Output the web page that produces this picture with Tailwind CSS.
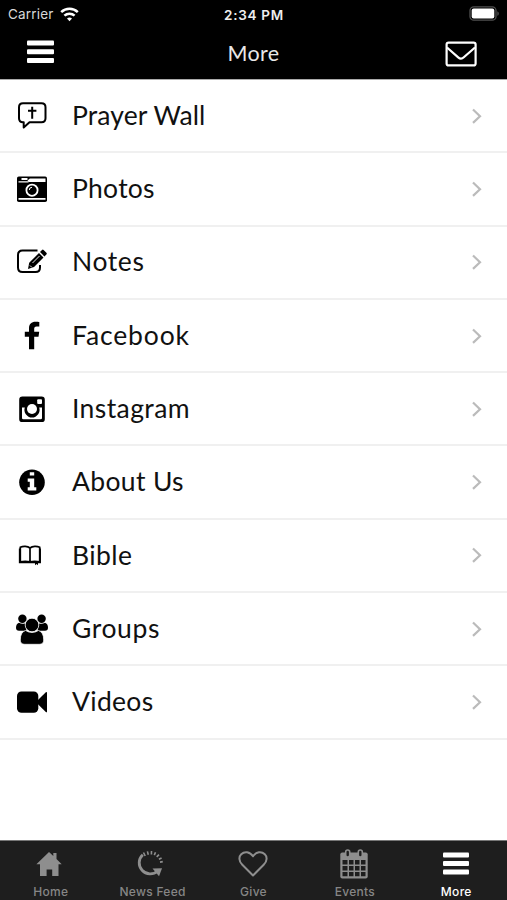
<!DOCTYPE html>
<html lang="en">

<head>
    <meta charset="UTF-8">
    <meta name="viewport" content="width=device-width, initial-scale=1.0">
    <title>More</title>
    <script src="https://cdn.jsdelivr.net/npm/@tailwindcss/browser@4"></script>
</head>

<body class="bg-white h-screen flex flex-col overflow-hidden font-['Lato','Open_Sans',sans-serif]">

    <header class="bg-black text-white h-20 shrink-0 border-b border-[#aaa]">
        <!-- Status bar -->
        <div class="h-7 grid grid-cols-3 items-center pl-[8px] pr-[7px] font-['Inter',sans-serif]">
            <div class="flex items-center gap-[6px] pb-px">
                <span class="text-[13.5px] leading-7 tracking-[0.2px] text-[#d8d8d8]">Carrier</span>
                <svg class="w-[19px] h-[15px]" viewBox="0 0 19 15" fill="none" stroke="#fff" stroke-width="2.5">
                    <path d="M1.2 5.2a12 12 0 0 1 16.6 0" />
                    <path d="M4.4 8.7a7.4 7.4 0 0 1 10.2 0" />
                    <path d="M9.5 14.2l-2.5-2.6a3.6 3.6 0 0 1 5 0z" fill="#fff" stroke="none" />
                </svg>
            </div>
            <span class="text-center text-[13.5px] leading-7 font-semibold tracking-[0.7px] text-[#eee]">2:34 PM</span>
            <svg class="w-[31px] h-[15px] justify-self-end mb-[2px]" viewBox="0 0 31 15">
                <rect x="1" y="0.8" width="26" height="13.4" rx="3.8" fill="none" stroke="#505050" stroke-width="1.3" />
                <rect x="2.7" y="2.5" width="22.6" height="10" rx="2" fill="#fff" />
                <path d="M28.3 5.2c2 .8 2 3.8 0 4.6z" fill="#505050" />
            </svg>
        </div>

        <div class="h-[51px] grid grid-cols-3 items-center pl-[27px] pr-[30px]">
            <svg class="w-[27px] h-6 mb-[3px]" viewBox="0 0 27 24" fill="#fff">
                <rect y="0.5" width="27" height="5" rx="1" />
                <rect y="9.3" width="27" height="5" rx="1" />
                <rect y="18" width="27" height="5" rx="1" />
            </svg>
            <h1 class="text-center text-[21.5px] leading-7 tracking-[0.3px] text-[#e8e8e8] pb-0.5 pl-[3px]">More</h1>
            <svg class="w-8 h-[26px] justify-self-end" viewBox="0 0 32 26" fill="none" stroke="#fff" stroke-width="2.2">
                <rect x="1.6" y="1.6" width="29" height="22.8" rx="2" />
                <path d="M2 6.5l11.2 9.8c2 1.800 3.600 1.800 5.600 0L30 6.500" />
            </svg>
        </div>
    </header>

    <main class="flex-1">
        <ul class="text-[26.5px] text-[#111]">
            <li class="h-[73.3px] flex items-center pl-[14px] pr-[24px] border-b-2 border-[#f0f0f0]">
                <svg class="w-9 h-9 mr-[22px]" viewBox="0 0 36 36" fill="none" stroke="#000" stroke-width="2">
                    <path d="M9 5.300h18.500q4 0 4 4v11q0 4-4 4H15.500L9.700 29.500v-5.200H9q-4 0-4-4v-11q0-4 4-4z" stroke-linejoin="round" />
                    <path d="M18.200 8.800v12M14 12.800h8.400" />
                </svg>
                <span class="flex-1 tracking-[0.1px]">Prayer Wall</span>
                <svg class="w-3 h-[18px]" viewBox="0 0 12 18" fill="none" stroke="#bbb" stroke-width="2.2"><path d="M2 2.5l7 6.700-7 6.700" /></svg>
            </li>
            <li class="h-[73.3px] flex items-center pl-[14px] pr-[24px] border-b-2 border-[#f0f0f0]">
                <svg class="w-9 h-9 mr-[22px]" viewBox="0 0 36 36">
                    <rect x="3" y="5.500" width="30" height="25.500" rx="1.800" />
                    <path d="M13.500 9.600l2.300-2H31.500v3.500H14.500" fill="#fff" />
                    <path d="M7.500 7h6v2h-6zM4.500 10.200h10v1.200h-10zM4.500 27h27v1.700h-27z" fill="#fff" />
                    <circle cx="18" cy="19.200" r="5.600" fill="none" stroke="#fff" stroke-width="1.800" />
                    <path d="M15.300 19a2.700 2.700 0 0 1 2.700-2.700" fill="none" stroke="#fff" />
                </svg>
                <span class="flex-1 tracking-[0.25px]">Photos</span>
                <svg class="w-3 h-[18px]" viewBox="0 0 12 18" fill="none" stroke="#bbb" stroke-width="2.2"><path d="M2 2.5l7 6.700-7 6.700" /></svg>
            </li>
            <li class="h-[73.3px] flex items-center pl-[14px] pr-[24px] border-b-2 border-[#f0f0f0]">
                <svg class="w-9 h-9 mr-[22px]" viewBox="0 0 36 36">
                    <path d="M23.500 6.500H8.500Q4 6.500 4 11v12.500Q4 28 8.500 28h13q4.500 0 4.500-4.500V21" fill="none" stroke="#000" stroke-width="2" />
                    <path d="M14 25l1.200-6.200L25 9l4.500 4.500-9.500 9.500zM26 8l2-2q.8-.8 1.600 0l2.800 2.800q.8.8 0 1.600l-2 2z" />
                    <path d="M18.500 19l7-7M16 21.500l1.800 1.800" stroke="#fff" stroke-width="0.9" />
                </svg>
                <span class="flex-1 tracking-[0.6px]">Notes</span>
                <svg class="w-3 h-[18px]" viewBox="0 0 12 18" fill="none" stroke="#bbb" stroke-width="2.2"><path d="M2 2.5l7 6.700-7 6.700" /></svg>
            </li>
            <li class="h-[73.3px] flex items-center pl-[14px] pr-[24px] border-b-2 border-[#f0f0f0]">
                <svg class="w-9 h-9 mr-[22px]" viewBox="0 0 36 36">
                    <path d="M25.300 4v4.400h-2.700c-2 0-2.400 1-2.400 2.400v3h5l-.7 5h-4.300v12.400H15V18.800h-4.200v-5H15v-3.500C15 6 17.500 3.700 21.500 3.700c1.800 0 3.300.1 3.800.3z" />
                </svg>
                <span class="flex-1 tracking-[0.85px]">Facebook</span>
                <svg class="w-3 h-[18px]" viewBox="0 0 12 18" fill="none" stroke="#bbb" stroke-width="2.2"><path d="M2 2.5l7 6.700-7 6.700" /></svg>
            </li>
            <li class="h-[73.3px] flex items-center pl-[14px] pr-[24px] border-b-2 border-[#f0f0f0]">
                <svg class="w-9 h-9 mr-[22px]" viewBox="0 0 36 36">
                    <rect x="5.200" y="5.500" width="25.600" height="25.600" rx="3.200" />
                    <path d="M8 16.500h2.800a7.600 7.600 0 1 0 14.400 0H28V27q0 1.300-1.300 1.300H9.300Q8 28.300 8 27z" fill="#fff" />
                    <circle cx="18" cy="18" r="5" fill="#fff" />
                    <rect x="23.200" y="8.300" width="4.800" height="4.600" rx="0.900" fill="#fff" />
                </svg>
                <span class="flex-1 tracking-[0.4px]">Instagram</span>
                <svg class="w-3 h-[18px]" viewBox="0 0 12 18" fill="none" stroke="#bbb" stroke-width="2.2"><path d="M2 2.5l7 6.700-7 6.700" /></svg>
            </li>
            <li class="h-[73.3px] flex items-center pl-[14px] pr-[24px] border-b-2 border-[#f0f0f0]">
                <svg class="w-9 h-9 mr-[22px]" viewBox="0 0 36 36">
                    <circle cx="18" cy="18.300" r="12.800" />
                    <path d="M15.800 8.200h4.400v3.400h-4.400zM13.700 14.500h6.500v8.700h2.100v3.300h-8.600v-3.300h2.100v-5.400h-2.100z" fill="#fff" />
                </svg>
                <span class="flex-1 tracking-[0.35px]">About Us</span>
                <svg class="w-3 h-[18px]" viewBox="0 0 12 18" fill="none" stroke="#bbb" stroke-width="2.2"><path d="M2 2.5l7 6.700-7 6.700" /></svg>
            </li>
            <li class="h-[73.3px] flex items-center pl-[14px] pr-[24px] border-b-2 border-[#f0f0f0]">
                <svg class="w-9 h-9 mr-[22px]" viewBox="0 0 36 36" fill="none" stroke="#000" stroke-width="1.7">
                    <path d="M16 11C13.500 9 9 9 6.300 10.300v14.500q5-1 9.700 0 4.700-1 9.700 0V10.300C23 9 18.500 9 16 11v13.800" />
                    <path d="M5.500 11.500v14h20.800v-14" stroke-width="1.300" />
                    <path d="M21 25h3v3.300l-1.500-1.200-1.500 1.200z" fill="#000" stroke="none" />
                </svg>
                <span class="flex-1 tracking-[0.4px]">Bible</span>
                <svg class="w-3 h-[18px]" viewBox="0 0 12 18" fill="none" stroke="#bbb" stroke-width="2.2"><path d="M2 2.5l7 6.700-7 6.700" /></svg>
            </li>
            <li class="h-[73.3px] flex items-center pl-[14px] pr-[24px] border-b-2 border-[#f0f0f0]">
                <svg class="w-9 h-9 mr-[22px]" viewBox="0 0 36 36">
                    <circle cx="8.400" cy="7.700" r="4.200" />
                    <circle cx="27.600" cy="7.700" r="4.200" />
                    <path d="M5 11.800q3.500 2 6.800.2l.5 7.700H5q-3 0-3-3 0-3.800 3-4.900zM31 11.800q-3.500 2-6.800.2l-.5 7.700H31q3 0 3-3 0-3.800-3-4.900z" />
                    <path d="M11.500 19.500q-5.200 1.700-5.200 9.500 0 4.300 4.500 4.300h14.400q4.500 0 4.500-4.300 0-7.800-5.200-9.500-6.500 4-13 0z" stroke="#fff" stroke-width="0.7" />
                    <circle cx="18" cy="14" r="6.800" stroke="#fff" stroke-width="0.8" />
                </svg>
                <span class="flex-1 tracking-[0.6px]">Groups</span>
                <svg class="w-3 h-[18px]" viewBox="0 0 12 18" fill="none" stroke="#bbb" stroke-width="2.2"><path d="M2 2.5l7 6.700-7 6.700" /></svg>
            </li>
            <li class="h-[73.3px] flex items-center pl-[14px] pr-[24px] border-b-2 border-[#f0f0f0]">
                <svg class="w-9 h-9 mr-[22px]" viewBox="0 0 36 36">
                    <rect x="3" y="7.500" width="21.300" height="21.300" rx="4.500" />
                    <path d="M23.500 16.500l8.300-8.300q1.200-.7 1.200.6v18.700q0 1.300-1.200.6l-8.300-8.300z" />
                </svg>
                <span class="flex-1 tracking-[0.3px]">Videos</span>
                <svg class="w-3 h-[18px]" viewBox="0 0 12 18" fill="none" stroke="#bbb" stroke-width="2.2"><path d="M2 2.5l7 6.700-7 6.700" /></svg>
            </li>
        </ul>
    </main>

    <!-- Tab bar -->
    <nav class="h-[60px] shrink-0 bg-[#1e1e1e] border-t border-[#777] grid grid-cols-5 text-[#868686] text-[12px] leading-4 font-medium font-['Inter',sans-serif]">
        <a class="flex flex-col items-center pt-[7px]">
            <svg class="w-8 h-8 mr-1" viewBox="0 0 32 32" fill="#8e8e8e">
                <path d="M16 4l4.300 4V5h3.200v6l5.200 5.300H25.500V28h-6.300v-6.500h-5.600V28H7V16.300H3.400z" />
            </svg>
            <span class="mt-1 tracking-[0.3px]">Home</span>
        </a>
        <a class="flex flex-col items-center pt-[7px]">
            <svg class="w-8 h-8 mr-1" viewBox="0 0 32 32" fill="none" stroke="#8e8e8e">
                <path d="M8.800 6.800a10.500 10.500 0 1 0 14.800 16.200" stroke-width="2.8" />
                <path d="M18.500 20.500l9.500-.3-3 8z" fill="#8e8e8e" stroke="none" />
                <path d="M9.500 4.500l1.700 3.500M13.400 3.400l.9 3.400M17.500 3.100l-.1 3.300M21.500 4.200l-1.200 2.900M25 6.700l-2.300 2.200M27.600 10l-2.700 1.300M28.800 13.600l-2.800.5" stroke-width="1.6" />
            </svg>
            <span class="mt-1 pl-px tracking-[0.3px]">News Feed</span>
        </a>
        <a class="flex flex-col items-center pt-[7px]">
            <svg class="w-8 h-8" viewBox="0 0 32 32" fill="none" stroke="#8e8e8e" stroke-width="2">
                <path d="M16 27.500L5.300 16.800C1.500 13 1.800 8.500 4.200 6.200 7.500 3 12.800 3.500 16 8.300c3.200-4.800 8.500-5.300 11.800-2.100 2.400 2.300 2.700 6.800-1.100 10.600z" stroke-linejoin="round" />
            </svg>
            <span class="mt-1 tracking-[0.3px]">Give</span>
        </a>
        <a class="flex flex-col items-center pt-[7px]">
            <svg class="w-8 h-8 mr-px" viewBox="0 0 32 32">
                <rect x="2.300" y="4.500" width="27.400" height="26" rx="2" fill="#8e8e8e" />
                <path d="M4.500 12h5v4.500h-5zM11 12h4.500v4.500H11zM17 12h4.500v4.500H17zM23 12h4.500v4.500H23zM4.500 18h5v4.500h-5zM11 18h4.500v4.500H11zM17 18h4.500v4.500H17zM23 18h4.500v4.500H23zM4.500 24h5v4.300h-5zM11 24h4.500v4.300H11zM17 24h4.500v4.300H17zM23 24h4.500v4.300H23z" fill="#1e1e1e" />
                <rect x="7.700" y="2" width="4" height="7" rx="2" fill="#1e1e1e" stroke="#8e8e8e" stroke-width="1.6" />
                <rect x="20.300" y="2" width="4" height="7" rx="2" fill="#1e1e1e" stroke="#8e8e8e" stroke-width="1.6" />
            </svg>
            <span class="mt-1 tracking-[0.3px]">Events</span>
        </a>
        <a class="flex flex-col items-center pt-[7px] text-white">
            <svg class="w-8 h-8 mr-px" viewBox="0 0 32 32" fill="#fff">
                <rect x="3" y="4.500" width="26" height="5" rx="1" />
                <rect x="3" y="13" width="26" height="5" rx="1" />
                <rect x="3" y="21.500" width="26" height="5" rx="1" />
            </svg>
            <span class="mt-1 tracking-[0.3px]">More</span>
        </a>
    </nav>

</body>

</html>
